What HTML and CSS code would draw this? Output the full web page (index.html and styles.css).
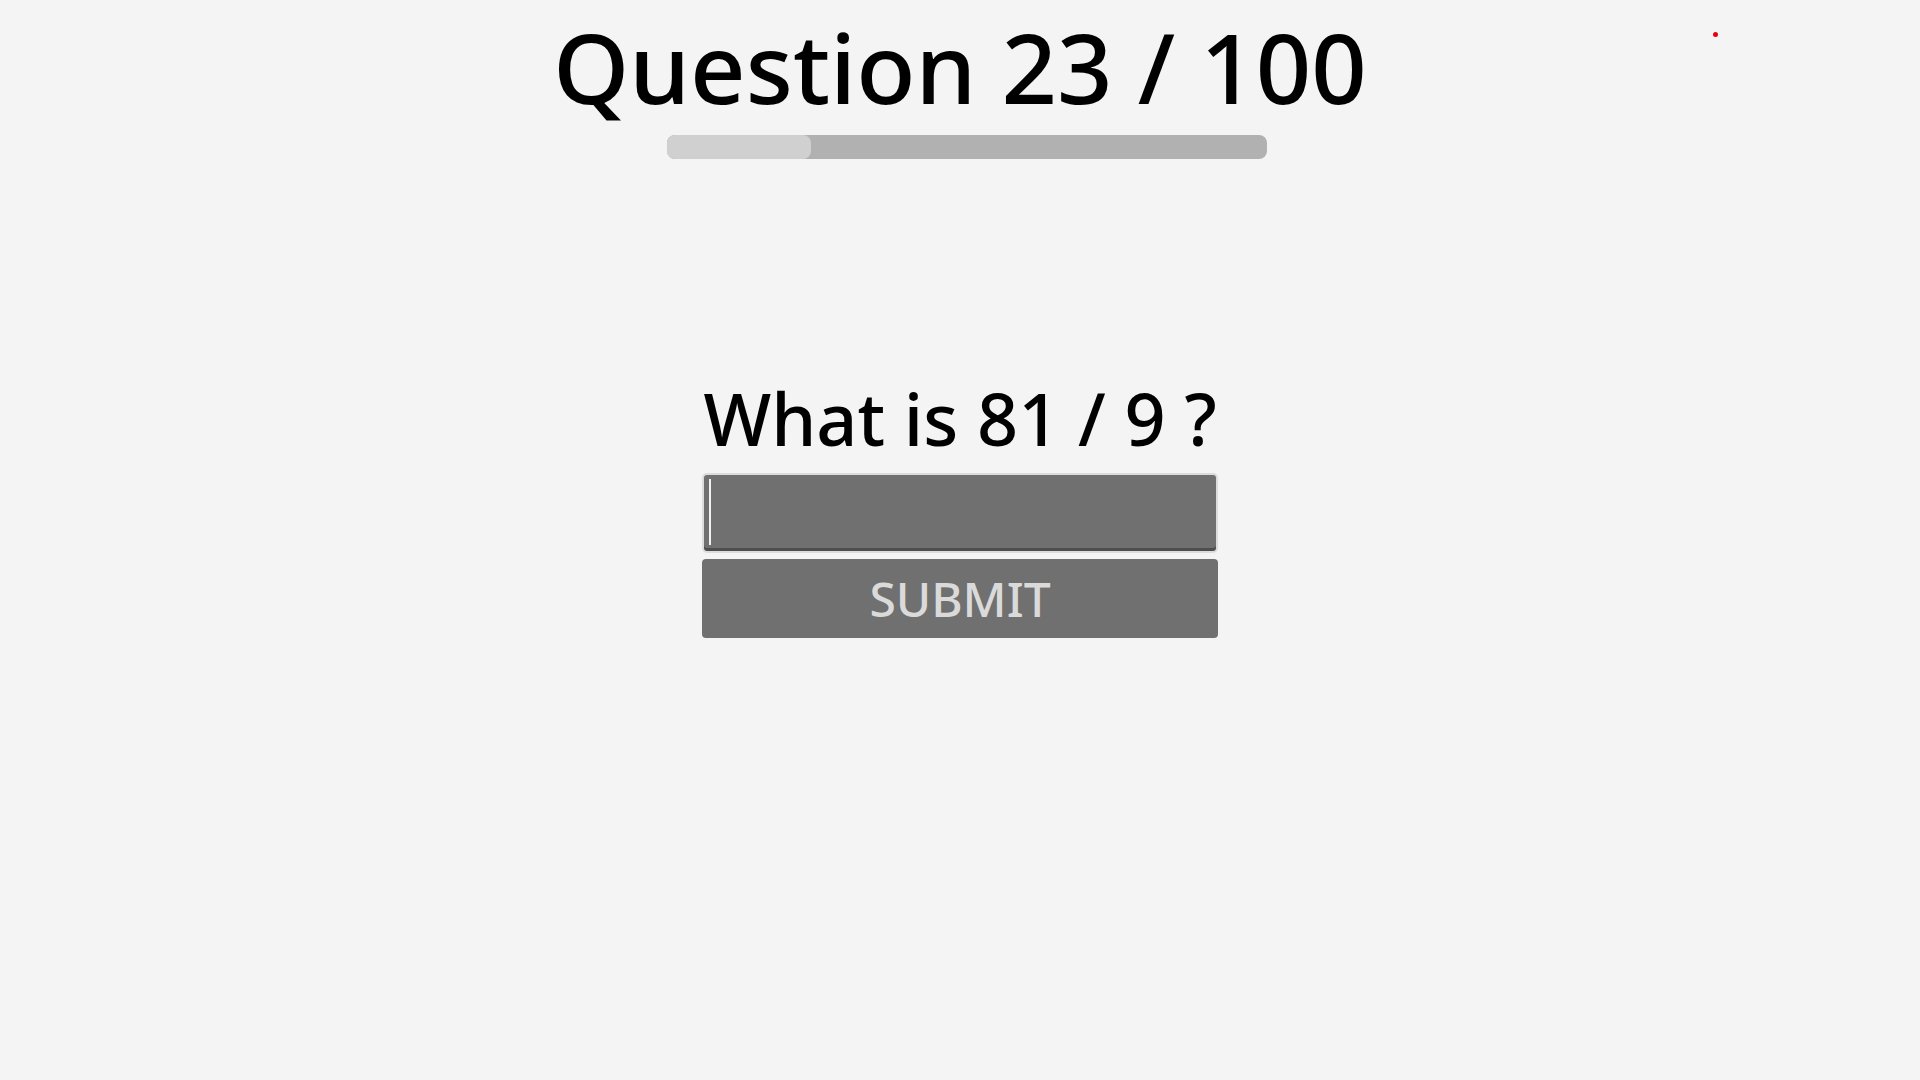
FILE: index.html
```html
<!DOCTYPE html>
<html lang="en">
<head>
    <meta charset="UTF-8">
    <meta name="viewport" content="width=device-width, initial-scale=1.0">
    <title>Math Quiz</title>
    <link rel="stylesheet" href="styles.css">
</head>
<body>
    <div class="recorder-dot"></div>
    <div class="quiz">
        <h1 class="counter">Question 23 / 100</h1>
        <div class="progress">
            <div class="progress-fill" style="width: 24%;"></div>
        </div>

        <form class="question" id="answer-form">
            <h2 class="prompt">What is 81 / 9 ?</h2>
            <input type="text" class="answer" id="answer" autocomplete="off" autofocus>
            <button type="submit" class="submit">SUBMIT</button>
        </form>
    </div>

    <script>
        document.getElementById("answer-form").addEventListener("submit", (e) => {
            e.preventDefault();
        });
    </script>
</body>
</html>
```

FILE: styles.css
```css
* {
    margin: 0;
    padding: 0;
    box-sizing: border-box;
}
body {
    background-color: #f4f4f4;
    font-family: "Noto Sans", "Open Sans", sans-serif;
    color: #000;
}
.quiz {
    display: flex;
    flex-direction: column;
    align-items: center;
}
.counter {
    font-size: 97px;
    font-weight: 500;
    line-height: normal;
}
.progress {
    width: 600px;
    height: 24px;
    margin-top: 3px;
    margin-left: 14px;
    background-color: #b1b1b1;
    border-radius: 8px;
    overflow: hidden;
}
.progress-fill {
    height: 100%;
    background-color: #d0d0d0;
    border-radius: 8px;
}
.question {
    display: flex;
    flex-direction: column;
    align-items: center;
    width: 516px;
    margin-top: 210px;
}
.prompt {
    font-size: 72px;
    font-weight: 500;
    line-height: normal;
    white-space: nowrap;
}
.answer {
    width: 100%;
    height: 80px;
    margin-top: 6px;
    background-color: #707070;
    background-image: linear-gradient(#f0f0f0, #f0f0f0);
    background-repeat: no-repeat;
    background-size: 2px 66px;
    background-position: 5px 4px;
    border: 2px solid #dcdcdc;
    border-radius: 5px;
    box-shadow: inset 0 -3px 0 #4e4e4e;
    color: #fff;
    caret-color: #fff;
    font-family: inherit;
    font-size: 48px;
    padding: 0 8px;
    outline: none;
}
.submit {
    width: 100%;
    height: 79px;
    margin-top: 6px;
    background-color: #707070;
    border: none;
    border-radius: 4px;
    color: #dadada;
    font-family: inherit;
    font-size: 48px;
    font-weight: 500;
    cursor: pointer;
}
.recorder-dot {
    position: absolute;
    top: 32px;
    left: 1713px;
    width: 5px;
    height: 5px;
    border-radius: 50%;
    background-color: #e8000b;
}
```
